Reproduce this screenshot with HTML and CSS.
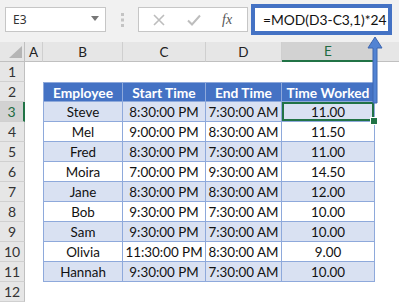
FILE: index.html
```html
<!DOCTYPE html>
<html>
<head>
    <title>Time Worked</title>
    <link rel="stylesheet" href="styles.css">
</head>
<body>
    <div class="toolbar">
        <div class="namebox">
            <span>E3</span>
            <svg class="caret" width="8" height="5" viewBox="0 0 8 5"><path d="M0 0H8L4 5Z" fill="#777"/></svg>
        </div>
        <svg class="grip" width="3" height="14" viewBox="0 0 3 14">
            <rect x="0" y="0" width="3" height="3" fill="#c4c4c4"/>
            <rect x="0" y="5.5" width="3" height="3" fill="#c4c4c4"/>
            <rect x="0" y="11" width="3" height="3" fill="#c4c4c4"/>
        </svg>
        <div class="fxbox">
            <svg width="12" height="12" viewBox="0 0 12 12"><path d="M1 1L11 11M11 1L1 11" stroke="#bdbdbd" stroke-width="1.6"/></svg>
            <svg width="14" height="12" viewBox="0 0 14 12"><path d="M1 6.5L5 10.5L13 1.5" stroke="#bdbdbd" stroke-width="2" fill="none"/></svg>
            <span class="fx">fx</span>
        </div>
        <div class="formula">=MOD(D3-C3,1)*24</div>
    </div>

    <div class="sheet">
        <div class="corner"><svg width="13" height="12" viewBox="0 0 13 12"><path d="M13 0V12H0Z" fill="#b5b5b5"/></svg></div>
        <div class="ch">A</div>
        <div class="ch">B</div>
        <div class="ch">C</div>
        <div class="ch">D</div>
        <div class="ch active">E</div>
        <div class="ch last"></div>

        <div class="rh">1</div>
        <div></div><div></div><div></div><div></div><div></div><div></div>

        <div class="rh">2</div>
        <div></div>
        <div class="t th first">Employee</div>
        <div class="t th">Start Time</div>
        <div class="t th">End Time</div>
        <div class="t th">Time Worked</div>
        <div></div>

        <div class="rh active">3</div>
        <div></div>
        <div class="t alt first">Steve</div>
        <div class="t alt">8:30:00 PM</div>
        <div class="t alt">7:30:00 AM</div>
        <div class="t alt selected">11.00<span class="handle"></span></div>
        <div></div>

        <div class="rh">4</div>
        <div></div>
        <div class="t first">Mel</div>
        <div class="t">9:00:00 PM</div>
        <div class="t">8:30:00 AM</div>
        <div class="t">11.50</div>
        <div></div>

        <div class="rh">5</div>
        <div></div>
        <div class="t alt first">Fred</div>
        <div class="t alt">8:30:00 PM</div>
        <div class="t alt">7:30:00 AM</div>
        <div class="t alt">11.00</div>
        <div></div>

        <div class="rh">6</div>
        <div></div>
        <div class="t first">Moira</div>
        <div class="t">7:00:00 PM</div>
        <div class="t">9:30:00 AM</div>
        <div class="t">14.50</div>
        <div></div>

        <div class="rh">7</div>
        <div></div>
        <div class="t alt first">Jane</div>
        <div class="t alt">8:30:00 PM</div>
        <div class="t alt">8:30:00 AM</div>
        <div class="t alt">12.00</div>
        <div></div>

        <div class="rh">8</div>
        <div></div>
        <div class="t first">Bob</div>
        <div class="t">9:30:00 PM</div>
        <div class="t">7:30:00 AM</div>
        <div class="t">10.00</div>
        <div></div>

        <div class="rh">9</div>
        <div></div>
        <div class="t alt first">Sam</div>
        <div class="t alt">9:30:00 PM</div>
        <div class="t alt">7:30:00 AM</div>
        <div class="t alt">10.00</div>
        <div></div>

        <div class="rh">10</div>
        <div></div>
        <div class="t first">Olivia</div>
        <div class="t">11:30:00 PM</div>
        <div class="t">8:30:00 AM</div>
        <div class="t">9.00</div>
        <div></div>

        <div class="rh">11</div>
        <div></div>
        <div class="t alt first">Hannah</div>
        <div class="t alt">9:30:00 PM</div>
        <div class="t alt">7:30:00 AM</div>
        <div class="t alt">10.00</div>
        <div></div>

        <div class="rh">12</div>
        <div></div><div></div><div></div><div></div><div></div><div></div>
    </div>

    <!-- arrow from the cell up to the formula -->
    <svg class="arrow" width="16" height="68" viewBox="0 0 16 68">
        <path d="M8 1L15 12H10V67H6V12H1Z" fill="#5283d3" stroke="#3d66b0" stroke-width="1"/>
    </svg>
</body>
</html>
```

FILE: styles.css
```css
body {
    margin: 0;
    width: 399px;
    height: 302px;
    overflow: hidden;
    background-color: #ffffff;
    font-family: 'Lato', 'Liberation Sans', sans-serif;
    position: relative;
}
.toolbar {
    height: 42px;
    background-color: #f1f1f1;
    display: flex;
    align-items: flex-start;
    padding-left: 5px;
    box-sizing: border-box;
}
.namebox {
    margin-top: 7px;
    width: 101px;
    height: 25px;
    box-sizing: border-box;
    background-color: #fff;
    border: 1px solid #c6c6c6;
    display: flex;
    align-items: center;
    justify-content: space-between;
    padding: 0 6px 0 7px;
    font-family: 'Noto Sans', sans-serif;
    font-size: 12px;
    color: #333;
}
.caret {
    margin-top: -2px;
}
.grip {
    margin: 13px 14px 0 15px;
}
.fxbox {
    margin-top: 7px;
    width: 110px;
    height: 25px;
    box-sizing: border-box;
    background-color: #fff;
    border: 1px solid #c6c6c6;
    display: flex;
    align-items: center;
    padding-left: 14px;
    gap: 22px;
}
.fx {
    font-family: 'Liberation Serif', serif;
    font-style: italic;
    font-size: 14px;
    color: #555;
    margin-left: -1px;
}
.formula {
    margin-top: 4px;
    margin-left: 3px;
    width: 141px;
    height: 31px;
    box-sizing: border-box;
    border: 4px solid #4472c4;
    background-color: #fff;
    font-size: 13.8px;
    color: #111;
    display: flex;
    align-items: center;
    padding-left: 8px;
    white-space: nowrap;
}
.sheet {
    display: grid;
    grid-template-columns: 25px 18px 80px 83px 76px 93px 1fr;
    grid-template-rows: 20px 20px repeat(11, 20px);
}
.corner {
    background-color: #e6e6e6;
    border-right: 1px solid #c0c0c0;
    border-bottom: 1px solid #c0c0c0;
    display: flex;
    align-items: flex-end;
    justify-content: flex-end;
    padding: 0 2px 3px 0;
}
.ch {
    background-color: #e6e6e6;
    border-right: 1px solid #cfcfcf;
    border-bottom: 1px solid #c0c0c0;
    font-size: 13.5px;
    color: #222;
    display: flex;
    align-items: center;
    justify-content: center;
}
.ch.last {
    border-right: none;
}
.ch.active {
    background-color: #d2d2d2;
    color: #1e6b41;
    border-bottom: 2px solid #217346;
}
.rh {
    background-color: #e6e6e6;
    border-right: 1px solid #c0c0c0;
    border-bottom: 1px solid #d0d0d0;
    font-size: 14px;
    color: #333;
    display: flex;
    align-items: center;
    justify-content: center;
    box-sizing: border-box;
}
.rh.active {
    background-color: #d2d2d2;
    color: #1e6b41;
    border-right: 2px solid #217346;
}
.t {
    border-right: 1px solid #8ea9db;
    border-bottom: 1px solid #8ea9db;
    font-size: 13.4px;
    color: #111;
    display: flex;
    align-items: center;
    justify-content: center;
    white-space: nowrap;
}
.t.first {
    border-left: 1px solid #8ea9db;
}
.th {
    background-color: #4472c4;
    color: #fff;
    font-weight: bold;
    font-size: 13.8px;
    border-top: 1px solid #8ea9db;
}
.alt {
    background-color: #d9e1f2;
}
.selected {
    position: relative;
    box-shadow: inset 0 0 0 2px #217346;
}
.handle {
    position: absolute;
    right: -4px;
    bottom: -4px;
    width: 6px;
    height: 6px;
    background-color: #217346;
    border: 1px solid #fff;
}
.arrow {
    position: absolute;
    left: 367px;
    top: 36px;
}
```
